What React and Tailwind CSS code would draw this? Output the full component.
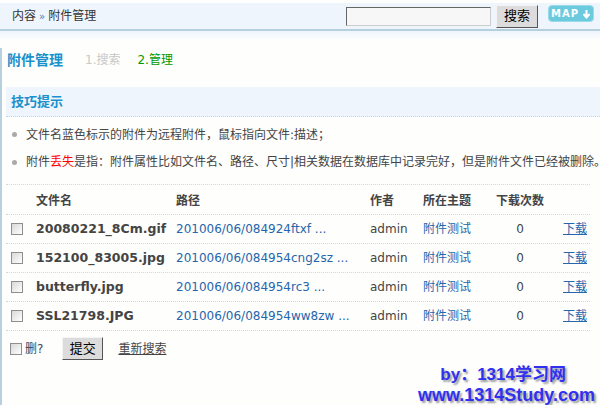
import React from "react";

const font = { fontFamily: '"DejaVu Sans", "Noto Sans CJK SC", sans-serif' };

const rows = [
  { name: "20080221_8Cm.gif", path: "201006/06/084924ftxf ..." },
  { name: "152100_83005.jpg", path: "201006/06/084954cng2sz ..." },
  { name: "butterfly.jpg", path: "201006/06/084954rc3 ..." },
  { name: "SSL21798.JPG", path: "201006/06/084954ww8zw ..." },
];

const Box = () => (
  <span className="block w-[12px] h-[12px] border border-[#8e8e8e] bg-gradient-to-br from-[#d8d8d8] to-[#ffffff]" />
);

const cols = "grid grid-cols-[30px_140px_194px_53px_73px_48px_1fr] items-center";

const App = () => {
  return (
    <div className="relative w-[600px] h-[405px] overflow-hidden bg-[#fefefc] text-[12px] text-[#444]" style={font}>
      {/* top bar */}
      <div className="mt-[3px] h-[26px] bg-[#eef5fd] flex items-center pl-[12px] pr-[6px]">
        <span className="text-[#333]">内容</span>
        <span className="text-[#4a7fb5] text-[10px] mx-[3px]">»</span>
        <span className="text-[#333]">附件管理</span>
        <div className="ml-auto flex items-center">
          <div className="w-[145px] h-[19px] bg-[#f7f7f7] border border-t-[#666] border-l-[#666] border-b-[#ccc] border-r-[#ccc]" />
          <div className="ml-[5px] w-[42px] h-[23px] bg-[#dcdcdc] border border-t-[#f4f4f4] border-l-[#f4f4f4] border-b-[#555] border-r-[#555] flex items-center justify-center text-[13px] text-black">
            搜索
          </div>
          <div className="ml-[10px] -mt-[5px] w-[46px] h-[17px] rounded-[4px] bg-[#6ccadf] border border-[#9adbe9] flex items-center justify-center text-white font-bold text-[10px] tracking-[1px]">
            MAP
            <svg width="9" height="10" viewBox="0 0 9 10" className="ml-[3px]">
              <path d="M4.5 1v7M1.5 5l3 3.5 3-3.5" stroke="#fff" strokeWidth="2" fill="none" />
            </svg>
          </div>
        </div>
      </div>
      <div className="h-[2px] bg-[#b7d0e0]" />
      <div className="h-[8px] bg-gradient-to-b from-[#eef5fc] to-[#fbfdff]" />

      {/* main */}
      <div className="border-l-2 border-[#b7d0e0] h-full pl-[4px]">
        <div className="mt-[9px] h-[24px] flex items-center">
          <span className="ml-[1px] text-[14px] font-bold text-[#1a90cc]">附件管理</span>
          <span className="ml-[22px] text-[#c8c8c8]">1.搜索</span>
          <span className="ml-[17px] text-[#009900]">2.管理</span>
        </div>

        <div className="mt-[15px] h-[30px] bg-[#eef5fd] border-b border-dotted border-[#bcd6ea] flex items-center pl-[5px]">
          <span className="text-[13px] font-bold text-[#1a90cc]">技巧提示</span>
        </div>

        <ul className="mt-[4px]">
          <li className="h-[27px] flex items-center">
            <span className="shrink-0 ml-[6px] mr-[9px] w-[5px] h-[5px] rounded-full bg-[#aaa]" />
            <span className="whitespace-nowrap">文件名蓝色标示的附件为远程附件，鼠标指向文件:描述；</span>
          </li>
          <li className="h-[27px] flex items-center pt-[1px]">
            <span className="shrink-0 ml-[6px] mr-[9px] w-[5px] h-[5px] rounded-full bg-[#aaa]" />
            <span className="whitespace-nowrap">
              附件<span className="text-[#ff0000]">丢失</span>是指：附件属性比如文件名、路径、尺寸|相关数据在数据库中记录完好，但是附件文件已经被删除。
            </span>
          </li>
        </ul>

        {/* table */}
        <div className="mt-[9px] w-[584px] border-t border-dotted border-[#c6dcee]">
          <div className={`${cols} h-[30px] pt-[2px] border-b border-dotted border-[#c6dcee] font-bold`}>
            <span />
            <span>文件名</span>
            <span>路径</span>
            <span>作者</span>
            <span>所在主题</span>
            <span className="text-center">下载次数</span>
            <span />
          </div>
          {rows.map((r) => (
            <div key={r.name} className={`${cols} h-[29px] border-b border-dotted border-[#c6dcee]`}>
              <span className="pl-[5px]">
                <Box />
              </span>
              <span className="font-bold text-[12.5px] whitespace-nowrap">{r.name}</span>
              <span className="text-[#2566ad] whitespace-nowrap">{r.path}</span>
              <span>admin</span>
              <span className="text-[#2566ad]">附件测试</span>
              <span className="text-center">0</span>
              <span className="pl-[19px] text-[#2566ad] underline">下载</span>
            </div>
          ))}
        </div>

        <div className="mt-[6px] h-[23px] flex items-center">
          <span className="ml-[4px]">
            <Box />
          </span>
          <span className="ml-[3px]">删?</span>
          <div className="ml-[19px] w-[41px] h-[23px] bg-[#dcdcdc] border border-t-[#f4f4f4] border-l-[#f4f4f4] border-b-[#555] border-r-[#555] flex items-center justify-center text-[13px] text-black">
            提交
          </div>
          <span className="ml-[15px] underline">重新搜索</span>
        </div>
      </div>

      {/* watermark */}
      <div
        className="absolute right-[5px] bottom-0 text-right font-bold text-[#3030f0] leading-[20px] [text-shadow:2px_2px_2px_#9a9a9a]"
        style={{ fontFamily: '"Liberation Sans", "Noto Sans CJK SC", sans-serif' }}
      >
        <div className="text-[17px] pr-[29px]">by：1314学习网</div>
        <div className="text-[18px]">www.1314Study.com</div>
      </div>
    </div>
  );
};

export default App;
